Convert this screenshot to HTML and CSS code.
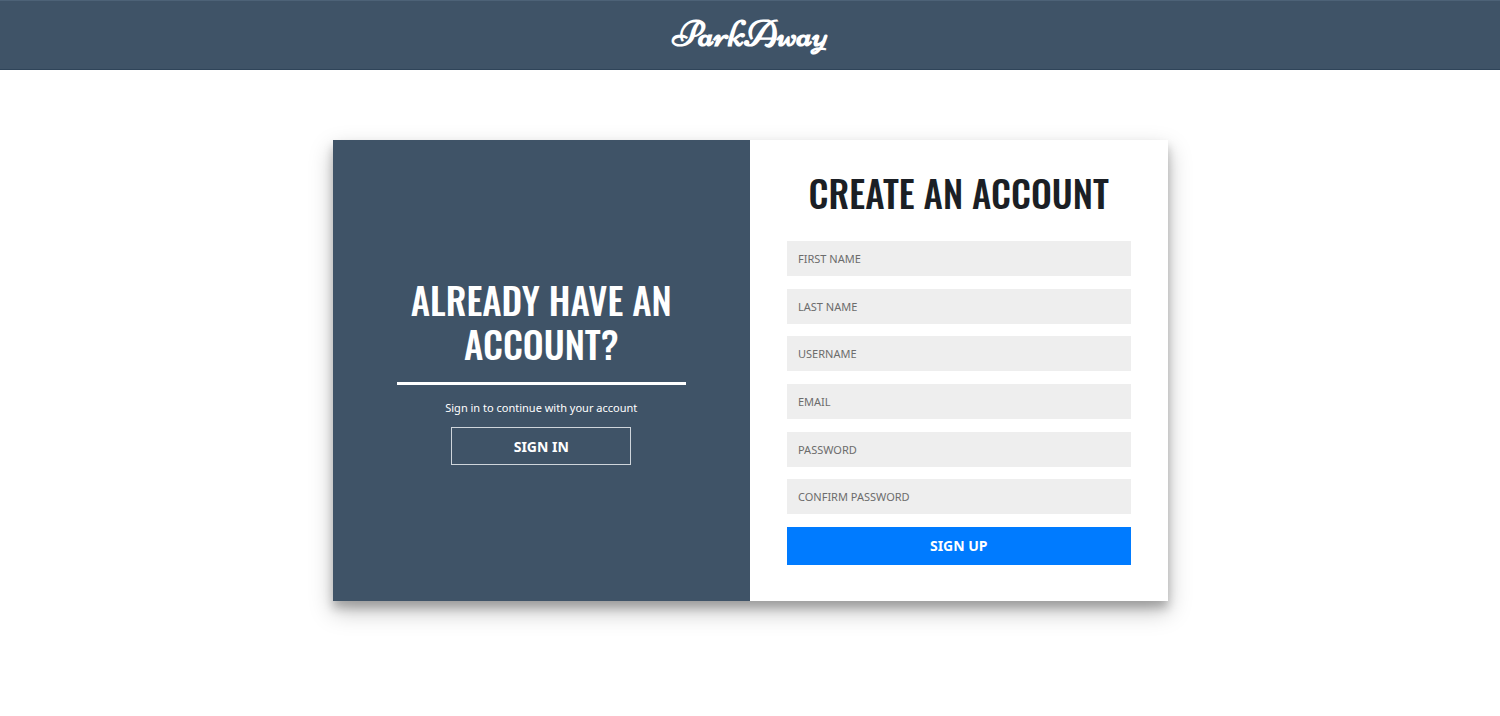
FILE: index.html
```html
<!DOCTYPE html>
<html lang="en">
<head>
  <meta charset="utf-8">
  <meta name="viewport" content="width=device-width, initial-scale=1">
  <title>ParkAway - Create an account</title>
  <link rel="stylesheet" href="styles.css">
</head>
<body>
  <header class="site-header">
    <a class="brand" href="#">ParkAway</a>
  </header>
  <main class="page">
    <div class="card">
      <section class="welcome">
        <h2 class="title">ALREADY HAVE AN ACCOUNT?</h2>
        <hr class="rule">
        <p class="note">Sign in to continue with your account</p>
        <button class="button button-outline" type="button">SIGN IN</button>
      </section>
      <form class="signup">
        <h1 class="title">CREATE AN ACCOUNT</h1>
        <div class="fields">
          <input class="field" type="text" aria-label="First name" placeholder="FIRST NAME">
          <input class="field" type="text" aria-label="Last name" placeholder="LAST NAME">
          <input class="field" type="text" aria-label="Username" placeholder="USERNAME">
          <input class="field" type="email" aria-label="Email" placeholder="EMAIL">
          <input class="field" type="password" aria-label="Password" placeholder="PASSWORD">
          <input class="field" type="password" aria-label="Confirm password" placeholder="CONFIRM PASSWORD">
          <button class="button button-primary" type="submit">SIGN UP</button>
        </div>
      </form>
    </div>
  </main>
</body>
</html>
```

FILE: styles.css
```css
* {
  box-sizing: border-box;
}

body {
  margin: 0;
  background: #fff;
  color: #1b1f25;
  font-family: "Segoe UI", "Noto Sans", sans-serif;
  font-size: 11px;
}

.site-header {
  display: flex;
  justify-content: center;
  padding: 11px 16px 13px;
  background: #3f5367;
  border-top: 1px solid #4d6277;
  border-bottom: 1px solid #2f4459;
}

.brand {
  color: #fff;
  font-family: Niconne, cursive;
  font-size: 38px;
  font-weight: 700;
  line-height: 44px;
  text-decoration: none;
}

.page {
  padding: 70px 16px;
}

.card {
  display: grid;
  grid-template-columns: 1fr 1fr;
  max-width: 835px;
  min-height: 461px;
  margin: 0 auto;
  background: #fff;
  box-shadow: 0 10px 22px rgba(0, 0, 0, 0.25), 0 7px 9px rgba(0, 0, 0, 0.22);
}

.welcome {
  display: flex;
  flex-direction: column;
  align-items: center;
  justify-content: center;
  padding: 34px 64px 32px;
  background: #3f5367;
  color: #fff;
}

.title {
  margin: 0;
  font-family: Oswald, sans-serif;
  font-size: 37px;
  font-weight: 500;
  line-height: 44px;
  text-align: center;
}

.rule {
  width: 100%;
  height: 3px;
  margin: 16px 0;
  border: 0;
  background: #fff;
}

.note {
  margin: 0 0 12px;
  line-height: 14px;
}

.signup {
  display: flex;
  flex-direction: column;
  gap: 26px;
  padding: 31px 37px 36px;
}

.fields {
  flex: 1;
  display: flex;
  flex-direction: column;
  justify-content: space-between;
}

.field {
  width: 100%;
  height: 35px;
  padding: 0 11px;
  border: 0;
  border-radius: 0;
  background: #eee;
  color: #333;
  font: inherit;
}

.field::placeholder {
  color: #6c6c6c;
  opacity: 1;
}

.button {
  height: 38px;
  border: 0;
  color: #fff;
  font: inherit;
  font-size: 14px;
  font-weight: 700;
  cursor: pointer;
}

.button-outline {
  width: 180px;
  border: 1px solid #cfd5db;
  background: transparent;
}

.button-primary {
  background: #007bff;
}
```
